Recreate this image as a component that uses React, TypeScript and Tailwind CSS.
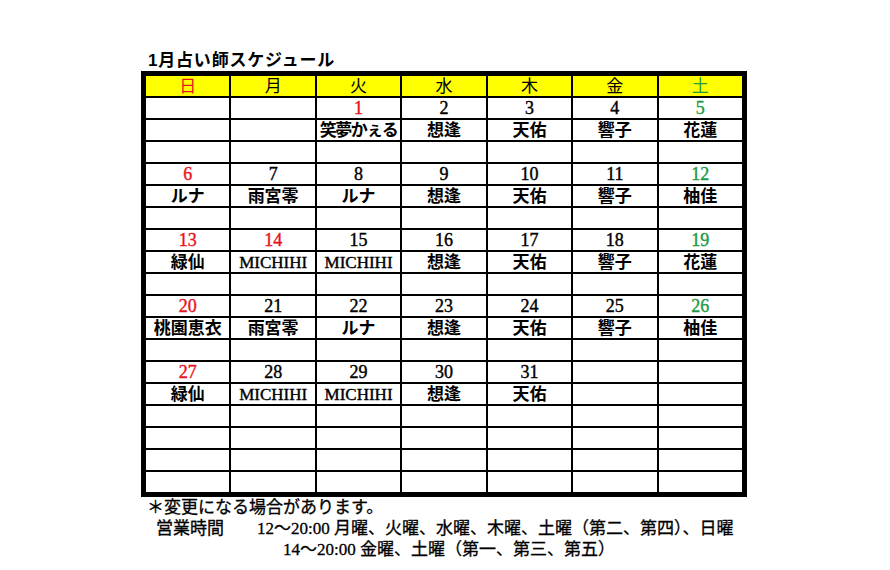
import React from "react";

type Cell = { n?: number; c?: "r" | "g"; name?: string } | null;

const weeks: Cell[][] = [
  [null, null, { n: 1, c: "r", name: "笑夢かぇる" }, { n: 2, name: "想逢" }, { n: 3, name: "天佑" }, { n: 4, name: "響子" }, { n: 5, c: "g", name: "花蓮" }],
  [{ n: 6, c: "r", name: "ルナ" }, { n: 7, name: "雨宮零" }, { n: 8, name: "ルナ" }, { n: 9, name: "想逢" }, { n: 10, name: "天佑" }, { n: 11, name: "響子" }, { n: 12, c: "g", name: "柚佳" }],
  [{ n: 13, c: "r", name: "緑仙" }, { n: 14, c: "r", name: "MICHIHI" }, { n: 15, name: "MICHIHI" }, { n: 16, name: "想逢" }, { n: 17, name: "天佑" }, { n: 18, name: "響子" }, { n: 19, c: "g", name: "花蓮" }],
  [{ n: 20, c: "r", name: "桃園恵衣" }, { n: 21, name: "雨宮零" }, { n: 22, name: "ルナ" }, { n: 23, name: "想逢" }, { n: 24, name: "天佑" }, { n: 25, name: "響子" }, { n: 26, c: "g", name: "柚佳" }],
  [{ n: 27, c: "r", name: "緑仙" }, { n: 28, name: "MICHIHI" }, { n: 29, name: "MICHIHI" }, { n: 30, name: "想逢" }, { n: 31, name: "天佑" }, null, null],
];

const days = [
  { d: "日", cls: "text-[#e8141c]" },
  { d: "月", cls: "text-black" },
  { d: "火", cls: "text-black" },
  { d: "水", cls: "text-black" },
  { d: "木", cls: "text-black" },
  { d: "金", cls: "text-black" },
  { d: "土", cls: "text-[#1e9b48]" },
];

const serif = { fontFamily: '"Liberation Serif", "Noto Sans CJK JP", serif' };

function numCls(c?: "r" | "g") {
  if (c === "r") return "text-[#e8141c]";
  if (c === "g") return "text-[#1e9b48]";
  return "text-black";
}

export default function App() {
  const rows: React.ReactNode[] = [];
  weeks.forEach((w, wi) => {
    w.forEach((cell, i) => {
      rows.push(
        <div
          key={`n${wi}-${i}`}
          className={`bg-white h-[20px] flex items-center justify-center text-[18px] leading-none [-webkit-text-stroke:0.4px] ${numCls(cell?.c)}`}
        >
          {cell?.n ?? ""}
        </div>
      );
    });
    w.forEach((cell, i) => {
      const name = cell?.name ?? "";
      const isLatin = name === "MICHIHI";
      const tight = name === "笑夢かぇる";
      rows.push(
        <div
          key={`m${wi}-${i}`}
          className={`bg-white h-[20px] flex items-center justify-center leading-none whitespace-nowrap text-black ${isLatin ? "text-[17px] font-normal [-webkit-text-stroke:0.4px]" : "text-[17px] font-bold"} ${tight ? "tracking-[-1.5px]" : ""}`}
        >
          {name}
        </div>
      );
    });
    const empties = wi === 4 ? 4 : 1;
    for (let r = 0; r < empties; r++) {
      for (let i = 0; i < 7; i++) {
        rows.push(<div key={`e${wi}-${r}-${i}`} className="bg-white h-[20px]" />);
      }
    }
  });

  return (
    <div className="w-[890px] h-[570px] bg-white overflow-hidden">
      <div className="ml-[141px] pt-[50px] w-[606px]">
        <div
          className="h-[21px] leading-[21px] pl-[7px] text-[17px] font-bold tracking-[0.8px] text-black"
          style={{ fontFamily: '"Liberation Sans", "Noto Sans CJK JP", sans-serif' }}
        >
          1月占い師スケジュール
        </div>
        <div className="border-[5px] border-black bg-black grid grid-cols-7 gap-[2px]" style={serif}>
          {days.map((d) => (
            <div key={d.d} className={`bg-[#ffff00] h-[20px] flex items-center justify-center text-[17px] leading-none font-normal ${d.cls}`}>
              {d.d}
            </div>
          ))}
          {rows}
        </div>
        <div className="text-black text-[17px] leading-[21px] [-webkit-text-stroke:0.3px]" style={serif}>
          <div className="pl-[6px]">＊変更になる場合があります。</div>
          <div className="flex pl-[15px]">
            <span className="w-[101px]">営業時間</span>
            <span>12～20:00 月曜、火曜、水曜、木曜、土曜（第二、第四）、日曜</span>
          </div>
          <div className="pl-[142px]">14～20:00 金曜、土曜（第一、第三、第五）</div>
        </div>
      </div>
    </div>
  );
}
